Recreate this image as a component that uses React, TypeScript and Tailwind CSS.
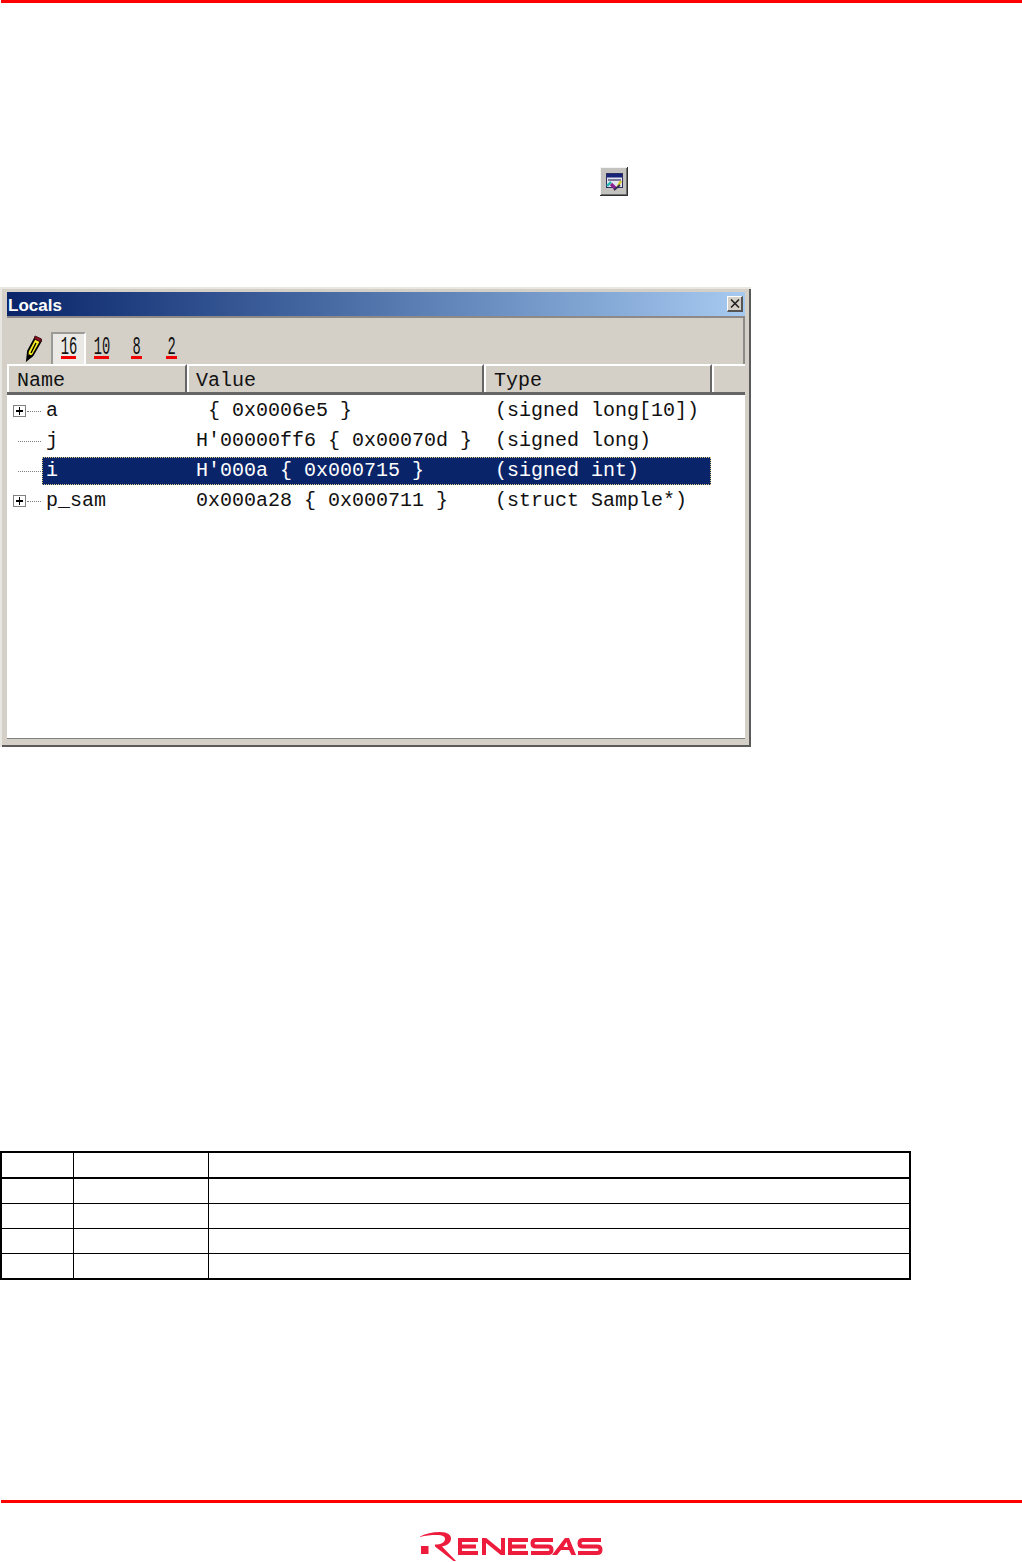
const mono = { fontFamily: '"Liberation Mono", monospace' };

function Logo() {
  return (
    <svg width="190" height="32" viewBox="0 0 190 32" className="block" aria-label="Renesas">
      <g fill="#ee1c3c">
        <rect x="3" y="17" width="7.5" height="8" />
        <path d="M2 7.5 C8 4.5 14 3 22 3 C30 3 33 6 33 9.5 C33 14 29 16.5 24 17.5 L38 32 L35.5 32 L17 17.6 L17 15.5 C23 15.5 27 13.5 27 10 C27 7 24 6 19 6 C13 6 7 6.5 2 8 Z" />
        <path d="M134 26 L147 9 H151 L158 26 H153.5 L151 21 H143 L139 26 Z M145.5 18 H150 L148.5 13 Z" fillRule="evenodd" />
      </g>
      <g fill="none" stroke="#ee1c3c" strokeWidth="4">
        <path d="M60 11 H42 V24 H60 M42 17.5 H58" />
        <path d="M66 26 V11 H67.5 L83.5 24 H85 V9" />
        <path d="M110 11 H92 V24 H110 M92 17.5 H108" />
        <path d="M135 11 H118 Q114.5 11 114.5 14.2 Q114.5 17.5 118 17.5 H130 Q133.5 17.5 133.5 20.8 Q133.5 24 130 24 H113" />
        <path d="M183 11 H165 Q161.5 11 161.5 14.2 Q161.5 17.5 165 17.5 H179 Q182.5 17.5 182.5 20.8 Q182.5 24 179 24 H160" />
      </g>
    </svg>
  );
}

function ToolIcon() {
  return (
    <svg width="28" height="29" viewBox="0 0 28 29" className="block">
      <rect x="0" y="0" width="28" height="29" fill="#303030" />
      <rect x="0" y="0" width="27" height="28" fill="#f4f4f4" />
      <rect x="1" y="1" width="26" height="27" fill="#707070" />
      <rect x="1" y="1" width="25" height="26" fill="#c4c2be" />
      <rect x="6.5" y="6.5" width="16" height="14" fill="#e4e4ee" stroke="#303060" />
      <rect x="7" y="7" width="15" height="3.5" fill="#16247a" />
      <rect x="8" y="12" width="13" height="2" fill="#7a7a98" />
      <path d="M7 19 L11 15" stroke="#20b8b0" strokeWidth="2.4" />
      <path d="M21 14 L18 19" stroke="#d8c820" strokeWidth="2.4" />
      <path d="M11 17 L16 22" stroke="#8a2090" strokeWidth="3.4" />
      <path d="M14 23 L20 18" stroke="#303050" strokeWidth="1.8" />
    </svg>
  );
}

function Pencil() {
  return (
    <svg width="18" height="28" viewBox="0 0 18 28" className="block">
      <path d="M2 26 L3 17 L10 4 L16 7 L8 21 Z" fill="#f4ec20" stroke="#000" strokeWidth="1.8" />
      <path d="M10 2 L16.5 5 L15.5 8 L9.5 5 Z" fill="#8a1020" stroke="#401010" />
      <path d="M2 26 L3.5 20 L8 22.5 Z" fill="#000" />
      <path d="M6 19 L11 9" stroke="#000" strokeWidth="1.4" />
    </svg>
  );
}

function Radix({ label, w }: { label: string; w: string }) {
  return (
    <div className={`flex flex-col items-center ${w}`}>
      <span className="block h-[20px] scale-x-[0.55] text-[25px] leading-[24px] text-[#111]" style={mono}>{label}</span>
      <span className="block h-[3px] w-full bg-[#f00000]" />
    </div>
  );
}

function TreeLead({ plus }: { plus: boolean }) {
  return (
    <div className="flex h-full w-[35px] shrink-0 items-center">
      {plus ? (
        <>
          <span className="ml-[6px] relative block h-[12px] w-[13px] border border-[#808080] bg-white">
            <span className="absolute left-[2px] top-[4px] h-[2px] w-[7px] bg-black" />
            <span className="absolute left-[5px] top-[1px] h-[8px] w-[1px] bg-black" />
          </span>
          <span className="ml-[1px] block w-[14px] border-t border-dotted border-[#808080]" />
        </>
      ) : (
        <span className="ml-[11px] block w-[23px] border-t border-dotted border-[#808080]" />
      )}
    </div>
  );
}

const rows = [
  { plus: true, name: "a", value: " { 0x0006e5 }", type: "(signed long[10])" },
  { plus: false, name: "j", value: "H'00000ff6 { 0x00070d }", type: "(signed long)" },
  { plus: false, name: "i", value: "H'000a { 0x000715 }", type: "(signed int)", selected: true },
  { plus: true, name: "p_sam", value: "0x000a28 { 0x000711 }", type: "(struct Sample*)" },
];

function HeaderCell({ label, w, pl }: { label: string; w: string; pl: string }) {
  return (
    <div className={`flex h-full shrink-0 items-center border-t-2 border-l-2 border-t-white border-l-white border-r-2 border-r-[#666] pt-[4px] ${w} ${pl}`}>
      <span className="text-[20px] leading-none text-[#111]" style={mono}>{label}</span>
    </div>
  );
}

function LocalsWindow() {
  return (
    <div className="h-[460px] w-[751px] border-t-2 border-l-2 border-[#e8e6e0] bg-[#d4d0c8]">
      <div className="h-[458px] w-[749px] border-r-2 border-b-2 border-[#5a5a5a] pt-[3px] pl-[5px] pr-[3px]">
        <div className="flex h-[24px] w-[738px] items-center justify-between bg-gradient-to-r from-[#0a246a] to-[#a6caf0] pl-[1px] pr-[2px]">
          <span className="pt-[2px] text-[17px] font-bold leading-none text-white" style={{ fontFamily: '"Liberation Sans", sans-serif' }}>Locals</span>
          <span className="flex h-[16px] w-[16px] items-center justify-center border-t border-l border-white border-r-2 border-b-2 border-r-[#555] border-b-[#555] bg-[#d4d0c8]">
            <svg width="10" height="9" viewBox="0 0 10 9"><path d="M1 0.5 L9 8.5 M9 0.5 L1 8.5" stroke="#222" strokeWidth="1.6" /></svg>
          </span>
        </div>
        <div className="flex h-[48px] w-[738px] items-end border-t-2 border-r-2 border-[#8c8a86] pl-[18px]">
          <div className="mb-[2px] w-[18px]"><Pencil /></div>
          <div className="ml-[8px] flex h-[32px] w-[35px] flex-col items-center justify-end border-t-2 border-l-2 border-t-[#9a9a96] border-l-[#9a9a96] border-r-2 border-r-white bg-[#ebe9e5] pb-[5px]">
            <Radix label="16" w="w-[15px]" />
          </div>
          <div className="ml-[8px] pb-[5px]"><Radix label="10" w="w-[15px]" /></div>
          <div className="ml-[22px] pb-[5px]"><Radix label="8" w="w-[11px]" /></div>
          <div className="ml-[24px] pb-[5px]"><Radix label="2" w="w-[11px]" /></div>
        </div>
        <div className="flex h-[31px] w-[738px] border-b-[3px] border-[#666]">
          <HeaderCell label="Name" w="w-[180px]" pl="pl-[8px]" />
          <HeaderCell label="Value" w="w-[297px]" pl="pl-[7px]" />
          <HeaderCell label="Type" w="w-[228px]" pl="pl-[8px]" />
          <div className="h-full flex-1 border-t-2 border-l-2 border-white" />
        </div>
        <div className="h-[344px] w-[738px] border-b border-[#808080] bg-white pt-[1px]">
          {rows.map((r) => (
            <div key={r.name} className="flex h-[30px] w-[704px] items-center text-[20px] leading-none" style={mono}>
              <TreeLead plus={r.plus} />
              <div className={`flex h-[28px] flex-1 items-center whitespace-pre ${r.selected ? "bg-[#0a246a] text-white outline outline-1 -outline-offset-1 outline-dotted outline-[#d8c880]" : "text-[#111]"}`}>
                <span className="ml-[4px] w-[150px] shrink-0">{r.name}</span>
                <span className="w-[299px] shrink-0">{r.value}</span>
                <span className="shrink-0">{r.type}</span>
              </div>
            </div>
          ))}
        </div>
      </div>
    </div>
  );
}

function TableRow({ h, thick }: { h: string; thick?: boolean }) {
  return (
    <div className={`flex ${h} ${thick ? "border-b-2 border-black" : ""}`}>
      <div className="w-[72px] border-r border-black" />
      <div className="w-[135px] border-r border-black" />
      <div className="flex-1" />
    </div>
  );
}

export default function App() {
  return (
    <div className="h-[1562px] w-[1022px] overflow-hidden bg-white">
      <div className="ml-[1px] h-[3px] bg-[#ff0000]" />
      <div className="ml-[600px] mt-[164px]"><ToolIcon /></div>
      <div className="mt-[91px]"><LocalsWindow /></div>
      <div className="mt-[404px] h-[129px] w-[911px] border-2 border-black">
        <TableRow h="h-[26px]" thick />
        <TableRow h="h-[25px] border-b border-black" />
        <TableRow h="h-[25px] border-b border-black" />
        <TableRow h="h-[25px] border-b border-black" />
        <TableRow h="h-[24px]" />
      </div>
      <div className="mt-[220px] ml-[1px] h-[3px] bg-[#ff0000]" />
      <div className="ml-[418px] mt-[26px]"><Logo /></div>
    </div>
  );
}
